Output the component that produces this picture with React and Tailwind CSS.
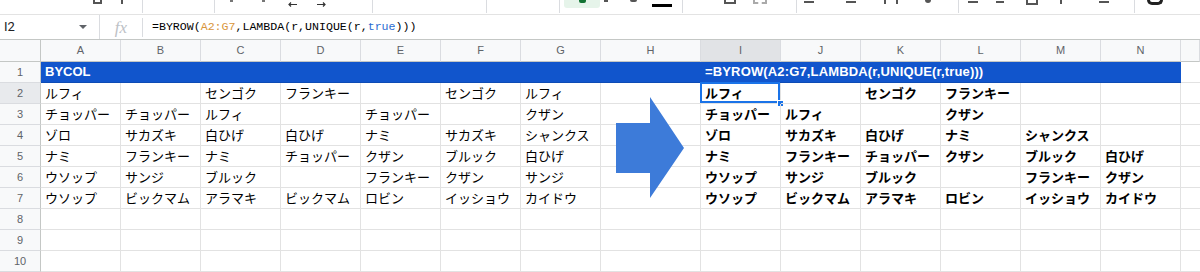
import React from "react";

const cols = ["A","B","C","D","E","F","G","H","I","J","K","L","M","N","O"];

const data = [
  ["ルフィ","","センゴク","フランキー","","センゴク","ルフィ","", "ルフィ","","センゴク","フランキー","",""],
  ["チョッパー","チョッパー","ルフィ","","チョッパー","","クザン","", "チョッパー","ルフィ","","クザン","",""],
  ["ゾロ","サカズキ","白ひげ","白ひげ","ナミ","サカズキ","シャンクス","", "ゾロ","サカズキ","白ひげ","ナミ","シャンクス",""],
  ["ナミ","フランキー","ナミ","チョッパー","クザン","ブルック","白ひげ","", "ナミ","フランキー","チョッパー","クザン","ブルック","白ひげ"],
  ["ウソップ","サンジ","ブルック","","フランキー","クザン","サンジ","", "ウソップ","サンジ","ブルック","","フランキー","クザン"],
  ["ウソップ","ビックマム","アラマキ","ビックマム","ロビン","イッショウ","カイドウ","", "ウソップ","ビックマム","アラマキ","ロビン","イッショウ","カイドウ"],
  ["","","","","","","","","","","","","",""],
  ["","","","","","","","","","","","","",""],
  ["","","","","","","","","","","","","",""],
];

function Toolbar() {
  return (
    <div className="h-[15px] border-b border-[#e3e3e3] flex items-start overflow-hidden">
      <div className="ml-[93px] w-[9px] h-[4px] border-x-2 border-b-2 border-[#555]" />
      <div className="ml-[19px] w-[2px] h-[4px] bg-[#555]" />
      <div className="ml-[19px] w-px h-[13px] bg-[#dadce0]" />
      <div className="ml-[71px] w-px h-[13px] bg-[#dadce0]" />
      <div className="ml-[15px] w-[3px] h-[2px] bg-[#777]" />
      <div className="ml-[29px] w-[3px] h-[2px] bg-[#777]" />
      <svg className="ml-[23px] mt-[2px]" width="9" height="5" viewBox="0 0 9 5"><path d="M9 2.5H1M3 0.5L1 2.5L3 4.5" stroke="#333" strokeWidth="1.2" fill="none"/></svg>
      <svg className="ml-[20px] mt-[2px]" width="9" height="5" viewBox="0 0 9 5"><path d="M0 2.5H8M6 0.5L8 2.5L6 4.5" stroke="#333" strokeWidth="1.2" fill="none"/></svg>
      <div className="ml-[46px] w-px h-[13px] bg-[#dadce0]" />
      <div className="ml-[113px] w-px h-[13px] bg-[#dadce0]" />
      <div className="ml-[72px] w-px h-[13px] bg-[#dadce0]" />
      <div className="ml-[4px] w-[36px] h-[8px] bg-[#e6f4ea] rounded-b-[3px] flex justify-center">
        <div className="w-[7px] h-[3px] bg-[#137333] rounded-b-[2px]" />
      </div>
      <div className="ml-[4px] w-[4px] h-[2px] bg-[#555]" />
      <div className="ml-[22px] w-[7px] h-[2px] bg-[#555] rounded-b" />
      <div className="ml-[15px] mt-[4px] w-[20px] h-[3px] bg-black" />
      <div className="ml-[10px] w-px h-[13px] bg-[#dadce0]" />
      <div className="ml-[41px] w-[12px] h-[4px] border-x-2 border-b-2 border-[#555]" />
      <div className="ml-[17px] w-[14px] h-[4px] border-x-2 border-b-2 border-dashed border-[#aaa]" />
      <div className="ml-[29px] w-px h-[13px] bg-[#dadce0]" />
      <div className="ml-[7px] mt-[1px] w-[10px] h-[2px] bg-[#555]" />
      <div className="ml-[32px] mt-[1px] w-[10px] h-[2px] bg-[#555]" />
      <div className="ml-[28px] w-[14px] h-[4px] border-x-2 border-[#555]" />
      <div className="ml-[27px] w-[6px] h-[3px] bg-[#555] rounded-b" />
      <div className="ml-[27px] w-px h-[13px] bg-[#dadce0]" />
      <div className="ml-[9px] mt-[1px] w-[10px] h-[2px] bg-[#555]" />
      <div className="ml-[18px] w-[8px] h-[3px] border-b-2 border-[#555]" />
      <div className="ml-[22px] w-[12px] h-[5px] border-x-2 border-b-2 border-[#555]" />
      <div className="ml-[22px] w-[2px] h-[4px] bg-[#555]" />
      <div className="ml-[37px] mt-[1px] w-[10px] h-[2px] bg-[#555]" />
      <div className="ml-[25px] w-px h-[13px] bg-[#dadce0]" />
      <div className="ml-[12px] w-[16px] h-[5px] border-x-[3px] border-b-[3px] border-[#222] rounded-b-full" />
    </div>
  );
}

function FormulaBar() {
  return (
    <div className="h-[25px] flex items-center border-b border-[#c4c7c5]">
      <div className="w-[100px] h-full flex items-center border-r border-[#dadce0]">
        <span className="pl-[4px] text-[13px] text-[#202124] font-['Roboto',sans-serif]">I2</span>
        <svg className="ml-[64px]" width="8" height="4" viewBox="0 0 8 4"><path d="M0 0H8L4 4Z" fill="#5f6368" /></svg>
      </div>
      <div className="w-[43px] h-[19px] flex items-center justify-center border-r border-[#dadce0]">
        <span className="text-[17px] italic text-[#bdc1c6] font-['Liberation_Serif',serif] leading-none">fx</span>
      </div>
      <div className="pl-[9px] text-[11.6px] text-black font-['Liberation_Mono',monospace] whitespace-nowrap">
        =BYROW(<span className="text-[#d8953b]">A2:G7</span>,LAMBDA(r,UNIQUE(r,<span className="text-[#2a6bd1]">true</span>)))
      </div>
    </div>
  );
}

export default function App() {
  return (
    <div className="relative w-[1200px] h-[272px] overflow-hidden bg-white font-['Liberation_Sans',sans-serif]">
      <Toolbar />
      <FormulaBar />
      <div className="grid grid-cols-[41px_repeat(7,80px)_100px_repeat(6,80px)_1fr]">
        <div className="h-[22px] bg-[#f8f9fa] border-r border-b border-[#c4c7c5]" />
        {cols.map((c) => (
          <div
            key={c}
            className={`h-[22px] flex items-center text-[11px] text-[#5f6368] border-r border-b border-b-[#c4c7c5] border-r-[#dadce0] overflow-hidden ${c === "I" ? "bg-[#e1e3e6]" : "bg-[#f8f9fa]"}`}
          >
            <div className={`shrink-0 text-center ${c === "O" ? "w-[80px]" : "w-full"}`}>{c}</div>
          </div>
        ))}

        <div className="h-[21px] flex items-center justify-center text-[11px] text-[#5f6368] bg-[#f8f9fa] border-r border-b border-r-[#c4c7c5] border-b-[#dadce0]">1</div>
        <div className="col-span-8 h-[21px] bg-[#1155cc] border-b border-[#0d4bb5] flex items-center pl-[4px] text-[13px] font-bold text-white whitespace-nowrap">BYCOL</div>
        <div className="col-span-6 h-[21px] bg-[#1155cc] border-b border-[#0d4bb5] flex items-center pl-[4px] text-[13px] font-bold text-white whitespace-nowrap tracking-[0.15px]">=BYROW(A2:G7,LAMBDA(r,UNIQUE(r,true)))</div>
        <div className="h-[21px] border-b border-[#e2e2e2]" />

        {data.map((row, ri) => (
          <React.Fragment key={ri}>
            <div className={`h-[21px] flex items-center justify-center text-[11px] text-[#5f6368] border-r border-b border-r-[#c4c7c5] border-b-[#dadce0] ${ri === 0 ? "bg-[#e8eaed]" : "bg-[#f8f9fa]"}`}>
              {ri + 2}
            </div>
            {row.map((v, ci) => (
              <div
                key={ci}
                className={`relative h-[21px] flex items-center pl-[4px] border-r border-b border-[#e2e2e2] text-[13px] text-black whitespace-nowrap font-['Noto_Sans_CJK_JP',sans-serif] ${ci >= 8 ? "font-bold" : ""}`}
              >
                {v}
                {ri === 0 && ci === 8 && (
                  <>
                    <div className="absolute -left-px -top-px w-[calc(100%+1px)] h-[calc(100%+1px)] border-2 border-[#1a73e8]" />
                    <div className="absolute -right-[4px] -bottom-[4px] w-[7px] h-[7px] bg-[#1a73e8] border border-white" />
                  </>
                )}
              </div>
            ))}
            <div className="h-[21px] border-b border-[#e2e2e2]" />
          </React.Fragment>
        ))}
      </div>

      <svg className="absolute left-[616px] top-[97px]" width="69" height="102" viewBox="0 0 69 102">
        <polygon points="0,26 34,26 34,0 68,51 34,101 34,76 0,76" fill="#3d7bd9" />
      </svg>
    </div>
  );
}
